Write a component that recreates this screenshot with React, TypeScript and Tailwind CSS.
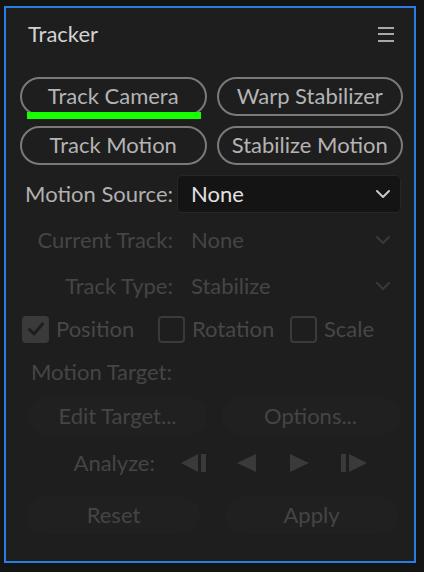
import React from "react";

const font = { fontFamily: "Lato, 'Noto Sans', sans-serif" };

function Chevron({ color }: { color: string }) {
  return (
    <svg width="16" height="10" viewBox="0 0 16 10" fill="none">
      <path d="M2 2 L8 8 L14 2" stroke={color} strokeWidth="2" strokeLinecap="round" strokeLinejoin="round" />
    </svg>
  );
}

function PillButton({ label }: { label: string }) {
  return (
    <div className="h-[39px] pb-[3px] rounded-full border-2 border-[#7a7a7a] flex items-center justify-center text-[22px] text-[#b4b4b4]">
      {label}
    </div>
  );
}

function CheckBox({ checked, label, w }: { checked?: boolean; label: string; w: string }) {
  return (
    <div className={`flex items-center gap-[7px] ${w}`}>
      {checked ? (
        <div className="w-[27px] h-[27px] rounded-[4px] bg-[#3a3a3a] flex items-center justify-center">
          <svg width="18" height="16" viewBox="0 0 18 16" fill="none">
            <path d="M2.5 8.5 L7 13 L15.5 3" stroke="#1e1e1e" strokeWidth="3" strokeLinecap="round" strokeLinejoin="round" />
          </svg>
        </div>
      ) : (
        <div className="w-[27px] h-[27px] rounded-[4px] border-2 border-[#3a3a3a]" />
      )}
      <span className="text-[22px] text-[#474747] pb-[1px]">{label}</span>
    </div>
  );
}

export default function App() {
  return (
    <div className="w-[424px] h-[572px] bg-[#141414] pt-[6px] pl-[4px]" style={font}>
      <div className="w-[412px] h-[557px] border-2 border-[#2b7de6] bg-[#1e1e1e] flex flex-col">
        {/* Header */}
        <div className="h-[52px] flex items-center justify-between pl-[22px] pr-[20px]">
          <span className="text-[22px] text-[#d2d2d2] pb-[2px]">Tracker</span>
          <div className="flex flex-col gap-[4.5px]">
            <div className="w-[16px] h-[2px] bg-[#a8a8a8]" />
            <div className="w-[16px] h-[2px] bg-[#a8a8a8]" />
            <div className="w-[16px] h-[2px] bg-[#a8a8a8]" />
          </div>
        </div>

        {/* Buttons */}
        <div className="mt-[17px] pl-[14px] pr-[11px] grid grid-cols-2 gap-x-[10px] gap-y-[10px]">
          <div className="relative">
            <PillButton label="Track Camera" />
            <div className="absolute left-[7px] right-[6px] top-[35px] h-[7px] bg-[#18ff00]" />
          </div>
          <PillButton label="Warp Stabilizer" />
          <PillButton label="Track Motion" />
          <PillButton label="Stabilize Motion" />
        </div>

        {/* Motion Source */}
        <div className="mt-[10px] flex items-center h-[38px]">
          <div className="w-[167px] text-right text-[22px] text-[#b0b0b0] pb-[2px]">Motion Source:</div>
          <div className="ml-[4px] w-[224px] h-[38px] rounded-[5px] bg-[#141414] border border-[#262626] flex items-center justify-between pl-[13px] pr-[9px]">
            <span className="text-[22px] text-[#e2e2e2] pb-[2px]">None</span>
            <Chevron color="#c8c8c8" />
          </div>
        </div>

        {/* Current Track */}
        <div className="mt-[8px] flex items-center h-[38px]">
          <div className="w-[167px] text-right text-[22px] text-[#454545] pb-[2px]">Current Track:</div>
          <div className="ml-[4px] w-[224px] h-[38px] flex items-center justify-between pl-[14px] pr-[10px]">
            <span className="text-[22px] text-[#454545] pb-[2px]">None</span>
            <Chevron color="#3a3a3a" />
          </div>
        </div>

        {/* Track Type */}
        <div className="mt-[8px] flex items-center h-[38px]">
          <div className="w-[167px] text-right text-[22px] text-[#454545] pb-[2px]">Track Type:</div>
          <div className="ml-[4px] w-[224px] h-[38px] flex items-center justify-between pl-[14px] pr-[10px]">
            <span className="text-[22px] text-[#454545] pb-[2px]">Stabilize</span>
            <Chevron color="#3a3a3a" />
          </div>
        </div>

        {/* Checkboxes */}
        <div className="mt-[5px] h-[38px] flex items-center pl-[16px]">
          <CheckBox checked label="Position" w="w-[136px]" />
          <CheckBox label="Rotation" w="w-[132px]" />
          <CheckBox label="Scale" w="w-[100px]" />
        </div>

        {/* Motion Target */}
        <div className="mt-[5px] h-[38px] pb-[2px] flex items-center pl-[25px] text-[22px] text-[#454545]">
          Motion Target:
        </div>

        {/* Edit Target / Options */}
        <div className="mt-[6px] pl-[22px] pr-[14px] grid grid-cols-2 gap-x-[14px]">
          <div className="h-[38px] pb-[2px] rounded-full bg-[#202020] flex items-center justify-center text-[22px] text-[#454545]">
            Edit Target...
          </div>
          <div className="h-[38px] pb-[2px] rounded-full bg-[#202020] flex items-center justify-center text-[22px] text-[#454545]">
            Options...
          </div>
        </div>

        {/* Analyze */}
        <div className="mt-[9px] h-[38px] flex items-center">
          <div className="w-[149px] text-right text-[22px] text-[#454545] pb-[2px]">Analyze:</div>
          <div className="ml-[26px] flex items-center">
            <svg width="26" height="18" viewBox="0 0 26 18">
              <polygon points="17,0 17,18 0,9" fill="#3a3a3a" />
              <rect x="20" y="0" width="5" height="18" fill="#3a3a3a" />
            </svg>
            <svg className="ml-[30px]" width="19" height="18" viewBox="0 0 19 18">
              <polygon points="19,0 19,18 0,9" fill="#3a3a3a" />
            </svg>
            <svg className="ml-[34px]" width="19" height="18" viewBox="0 0 19 18">
              <polygon points="0,0 0,18 19,9" fill="#3a3a3a" />
            </svg>
            <svg className="ml-[32px]" width="26" height="18" viewBox="0 0 26 18">
              <rect x="0" y="0" width="5" height="18" fill="#3a3a3a" />
              <polygon points="8,0 8,18 26,9" fill="#3a3a3a" />
            </svg>
          </div>
        </div>

        {/* Reset / Apply */}
        <div className="mt-[14px] pl-[21px] pr-[16px] grid grid-cols-2 gap-x-[25px]">
          <div className="h-[38px] pb-[2px] rounded-full bg-[#202020] flex items-center justify-center text-[22px] text-[#454545]">
            Reset
          </div>
          <div className="h-[38px] pb-[2px] rounded-full bg-[#202020] flex items-center justify-center text-[22px] text-[#454545]">
            Apply
          </div>
        </div>
      </div>
    </div>
  );
}
